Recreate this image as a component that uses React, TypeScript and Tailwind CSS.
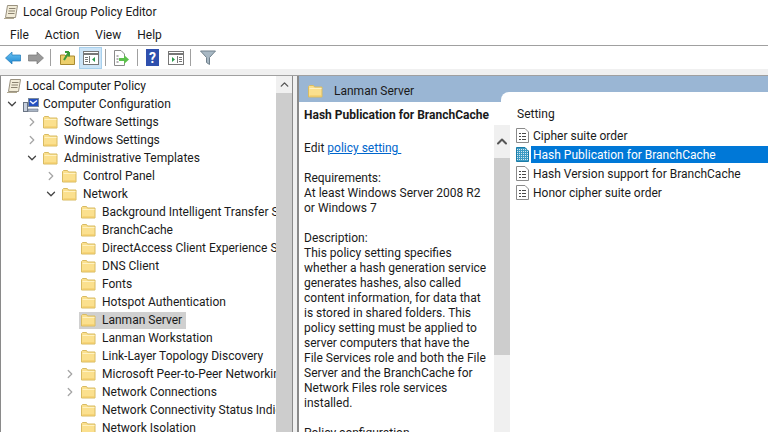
import React from 'react';
import { ChevronDown, ChevronRight, ChevronUp } from 'lucide-react';

function Folder() {
  return (
    <svg width="15" height="14" viewBox="0 0 15 14" className="shrink-0">
      <path d="M.5 13V2.5L1.5 1.5H5.5L6.5 3H14V13H.5Z" fill="#fbe08e" stroke="#d8bb62" />
      <path d="M1.5 4.5H13.5" stroke="#fff2c2" />
      <path d="M1.5 12H13.5" stroke="#f0c860" />
    </svg>
  );
}

function DocIcon({ selected = false }: { selected?: boolean }) {
  return (
    <svg width="13" height="15" viewBox="0 0 13 15" className="shrink-0">
      <path d="M.5 .5H9L12.5 4V14.5H.5Z" fill={selected ? '#3d9bc4' : '#fff'} stroke={selected ? '#1a7ca8' : '#8a8a8a'} />
      {selected ? <path d="M1 2.5h11M1 4.5h11M1 6.5h11M1 8.5h11M1 10.5h11M1 12.5h11" stroke="#d8e8f0" strokeDasharray="1 1" /> : (
        <path d="M3 5.5h2M6 5.5h4M3 8.5h2M6 8.5h4M3 11.5h2M6 11.5h4" stroke="#4a4a4a" />
      )}
    </svg>
  );
}

function ScrollIcon() {
  return (
    <svg width="16" height="16" viewBox="0 0 16 16" className="shrink-0">
      <path d="M4.5 1.5H14.5L12.5 13.5H2.5L4.5 1.5Z" fill="#f2ecd8" stroke="#9a9280" />
      <path d="M6 4.5h6.5M5.5 7h6.5M5 9.5h6.5" stroke="#8a8270" />
      <path d="M1 14.5H11" stroke="#b0a890" />
    </svg>
  );
}

function ComputerIcon() {
  return (
    <svg width="16" height="15" viewBox="0 0 16 15" className="shrink-0">
      <rect x="5.5" y="1.5" width="10" height="8" fill="#2450c0" stroke="#7a8a9c" />
      <path d="M7 4l3 2.5 4-3" stroke="#f0f4ff" strokeWidth="1.4" fill="none" />
      <rect x=".5" y="5.5" width="4" height="9" fill="#c8d0dc" stroke="#6a7484" />
      <path d="M5 12h10v2.5H5z" fill="#a8b4c4" stroke="#6a7484" strokeWidth=".6" />
    </svg>
  );
}

function TreeRow({ label, indent, arrow, icon, selected }: { label: string; indent: string; arrow?: 'open' | 'closed'; icon?: React.ReactNode; selected?: boolean }) {
  return (
    <div className={`flex h-[18px] items-center ${indent}`}>
      <span className="flex w-[16px] shrink-0 items-center">
        {arrow === 'open' && <ChevronDown size={14} strokeWidth={2.2} className="text-[#444]" />}
        {arrow === 'closed' && <ChevronRight size={14} strokeWidth={2.2} className="text-[#a6a6a6]" />}
      </span>
      <span className={`flex h-[17px] items-center pl-[2px] pr-[4px] ${selected ? 'bg-[#d0d0d0]' : ''}`}>
        {icon ?? <Folder />}
        <span className={`${icon ? 'ml-[4px]' : 'ml-[6px]'} whitespace-nowrap`}>{label}</span>
      </span>
    </div>
  );
}

function Toolbar() {
  return (
    <div className="flex h-[24px] items-center border-t border-[#a0a0a0] bg-white">
      <svg width="16" height="14" viewBox="0 0 16 14" className="ml-[5px]">
        <defs><linearGradient id="back" x1="0" y1="0" x2="0" y2="1"><stop offset="0" stopColor="#6cc4f4" /><stop offset="1" stopColor="#1d87d0" /></linearGradient></defs>
        <path d="M.5 7L7 1V4H15.5V10H7V13Z" fill="url(#back)" stroke="#1f78b8" strokeWidth=".7" strokeLinejoin="round" />
      </svg>
      <svg width="16" height="14" viewBox="0 0 16 14" className="ml-[7px]">
        <path d="M15.5 7L9 1V4H.5V10H9V13Z" fill="#999" stroke="#777" strokeWidth=".7" strokeLinejoin="round" />
      </svg>
      <div className="ml-[6px] h-[17px] w-px bg-[#a0a0a0]" />
      <svg width="15" height="15" viewBox="0 0 15 15" className="ml-[9px]">
        <path d="M.5 14.5V5H5L6 6H14.5V14.5Z" fill="#eccf6c" stroke="#a88a30" />
        <path d="M4 10L9 2M9 2H5M9 2V6.5" stroke="#3a9a3a" strokeWidth="2" fill="none" />
      </svg>
      <div className="ml-[4px] flex h-[22px] w-[23px] items-center justify-center border border-[#a8d0ec] bg-[#cce4f7]">
        <svg width="16" height="14" viewBox="0 0 16 14">
          <rect x=".5" y=".5" width="15" height="13" fill="#fff" stroke="#777" />
          <path d="M1 3h14" stroke="#777" strokeWidth="2" />
          <path d="M6.5 5v7M2 6.5h3M2 8.5h3M2 10.5h3" stroke="#777" />
          <path d="M12 6v5l-3-2.5z" fill="#2a9a4a" />
        </svg>
      </div>
      <div className="ml-[3px] h-[17px] w-px bg-[#a0a0a0]" />
      <svg width="15" height="16" viewBox="0 0 15 16" className="ml-[8px]">
        <path d="M.5 .5H7L10.5 4V15.5H.5Z" fill="#fff" stroke="#8a8a8a" />
        <path d="M2.5 6h2M2.5 9h2M2.5 12h2" stroke="#666" />
        <path d="M5 8h5V5l5 4.5-5 4.5v-3H5z" fill="#5cc04c" />
      </svg>
      <div className="ml-[8px] h-[17px] w-px bg-[#a0a0a0]" />
      <div className="ml-[8px] flex h-[17px] w-[13px] items-center justify-center bg-[#2f50ae] text-[14px] font-bold leading-none text-white">?</div>
      <svg width="16" height="14" viewBox="0 0 16 14" className="ml-[9px]">
        <rect x=".5" y=".5" width="15" height="13" fill="#fff" stroke="#777" />
        <path d="M1 3h14" stroke="#777" strokeWidth="2" />
        <path d="M9.5 5v7M11 6.5h3M11 8.5h3M11 10.5h3" stroke="#777" />
        <path d="M4 6v5l3-2.5z" fill="#2a9a4a" />
      </svg>
      <div className="ml-[6px] h-[17px] w-px bg-[#a0a0a0]" />
      <svg width="16" height="15" viewBox="0 0 16 15" className="ml-[9px]">
        <path d="M.5 1H15.5L9.5 7.5V14.5L6.5 12.5V7.5Z" fill="#a8b8c4" stroke="#70808c" />
      </svg>
    </div>
  );
}

const treeRows: [string, string, 'open' | 'closed' | undefined][] = [
  ['Software Settings', 'pl-[24px]', 'closed'],
  ['Windows Settings', 'pl-[24px]', 'closed'],
  ['Administrative Templates', 'pl-[24px]', 'open'],
  ['Control Panel', 'pl-[43px]', 'closed'],
  ['Network', 'pl-[43px]', 'open'],
  ['Background Intelligent Transfer Service', 'pl-[62px]', undefined],
  ['BranchCache', 'pl-[62px]', undefined],
  ['DirectAccess Client Experience Settings', 'pl-[62px]', undefined],
  ['DNS Client', 'pl-[62px]', undefined],
  ['Fonts', 'pl-[62px]', undefined],
  ['Hotspot Authentication', 'pl-[62px]', undefined],
  ['Lanman Server', 'pl-[62px]', undefined],
  ['Lanman Workstation', 'pl-[62px]', undefined],
  ['Link-Layer Topology Discovery', 'pl-[62px]', undefined],
  ['Microsoft Peer-to-Peer Networking Services', 'pl-[62px]', 'closed'],
  ['Network Connections', 'pl-[62px]', 'closed'],
  ['Network Connectivity Status Indicator', 'pl-[62px]', undefined],
  ['Network Isolation', 'pl-[62px]', undefined],
];

const settings = ['Cipher suite order', 'Hash Publication for BranchCache', 'Hash Version support for BranchCache', 'Honor cipher suite order'];

export default function App() {
  return (
    <div className="flex h-[432px] w-[768px] flex-col overflow-hidden bg-white font-['Roboto',sans-serif] text-[12px] leading-[18px] text-[#1a1a1a]">
      <div className="flex h-[24px] items-center pl-[3px]">
        <ScrollIcon />
        <span className="ml-[4px]">Local Group Policy Editor</span>
      </div>
      <div className="flex h-[21px] items-center gap-[16px] pl-[10px]">
        <span>File</span><span>Action</span><span>View</span><span>Help</span>
      </div>
      <Toolbar />
      <div className="h-[7px] border-b border-[#a0a0a0] bg-[#f0f0f0]" />
      <div className="flex min-h-0 flex-1 bg-[#f0f0f0]">
        <div className="flex w-[293px] shrink-0 overflow-hidden border-x border-[#8a8a8a] bg-white">
          <div className="w-[275px] shrink-0 overflow-hidden pt-[1px]">
            <div className="flex h-[18px] items-center pl-[5px]"><ScrollIcon /><span className="ml-[4px]">Local Computer Policy</span></div>
            <TreeRow label="Computer Configuration" indent="pl-[4px]" arrow="open" icon={<ComputerIcon />} />
            {treeRows.map(([label, indent, arrow]) => (
              <TreeRow key={label} label={label} indent={indent} arrow={arrow} selected={label === 'Lanman Server'} />
            ))}
          </div>
          <div className="flex w-[16px] shrink-0 flex-col bg-[#cdcdcd]">
            <div className="flex h-[17px] items-center justify-center bg-[#f0f0f0]"><ChevronUp size={13} strokeWidth={2.5} className="text-[#555]" /></div>
          </div>
        </div>
        <div className="w-[4px] shrink-0" />
        <div className="flex min-w-0 flex-1 flex-col border-l-2 border-[#8a8a8a]">
          <div className="relative flex h-[26px] shrink-0 items-center bg-[#9ab6d4] pl-[9px] pt-[3px]">
            <Folder />
            <span className="ml-[11px]">Lanman Server</span>
            <div className="absolute bottom-0 left-[202px] right-0 h-[10px] rounded-tl-[8px] bg-white" />
          </div>
          <div className="flex min-h-0 flex-1 bg-white">
            <div className="w-[195px] shrink-0 overflow-hidden pl-[5px] pt-[6px] leading-[15px]">
              <div className="whitespace-nowrap font-bold">Hash Publication for BranchCache</div>
              <div className="mt-[18px] whitespace-pre">Edit <span className="text-[#0066cc] underline">policy setting </span></div>
              <div className="mt-[15px]">Requirements:</div>
              <div>At least Windows Server 2008 R2</div>
              <div>or Windows 7</div>
              <div className="mt-[15px]">Description:</div>
              <div className="w-[186px]">This policy setting specifies whether a hash generation service generates hashes, also called content information, for data that is stored in shared folders. This policy setting must be applied to server computers that have the File Services role and both the File Server and the BranchCache for Network Files role services installed.</div>
              <div className="mt-[15px]">Policy configuration</div>
            </div>
            <div className="flex w-[16px] shrink-0 flex-col pt-[23px]">
              <div className="flex h-[33px] items-center justify-center bg-[#f0f0f0]"><ChevronUp size={17} strokeWidth={3} className="text-[#555]" /></div>
              <div className="h-[197px] bg-[#cdcdcd]" />
              <div className="flex-1 bg-[#f0f0f0]" />
            </div>
            <div className="min-w-0 flex-1 pl-[6px]">
              <div className="mt-[3px] pl-[1px]">Setting</div>
              <div className="mt-[3px]">
                {settings.map((s, i) => (
                  <div key={s} className="flex h-[19px] items-center">
                    <DocIcon selected={i === 1} />
                    <span className={`ml-[2px] flex h-[17px] flex-1 items-center pl-[2px] ${i === 1 ? 'bg-[#0078d7] text-white' : ''}`}>{s}</span>
                  </div>
                ))}
              </div>
            </div>
          </div>
        </div>
      </div>
    </div>
  );
}
